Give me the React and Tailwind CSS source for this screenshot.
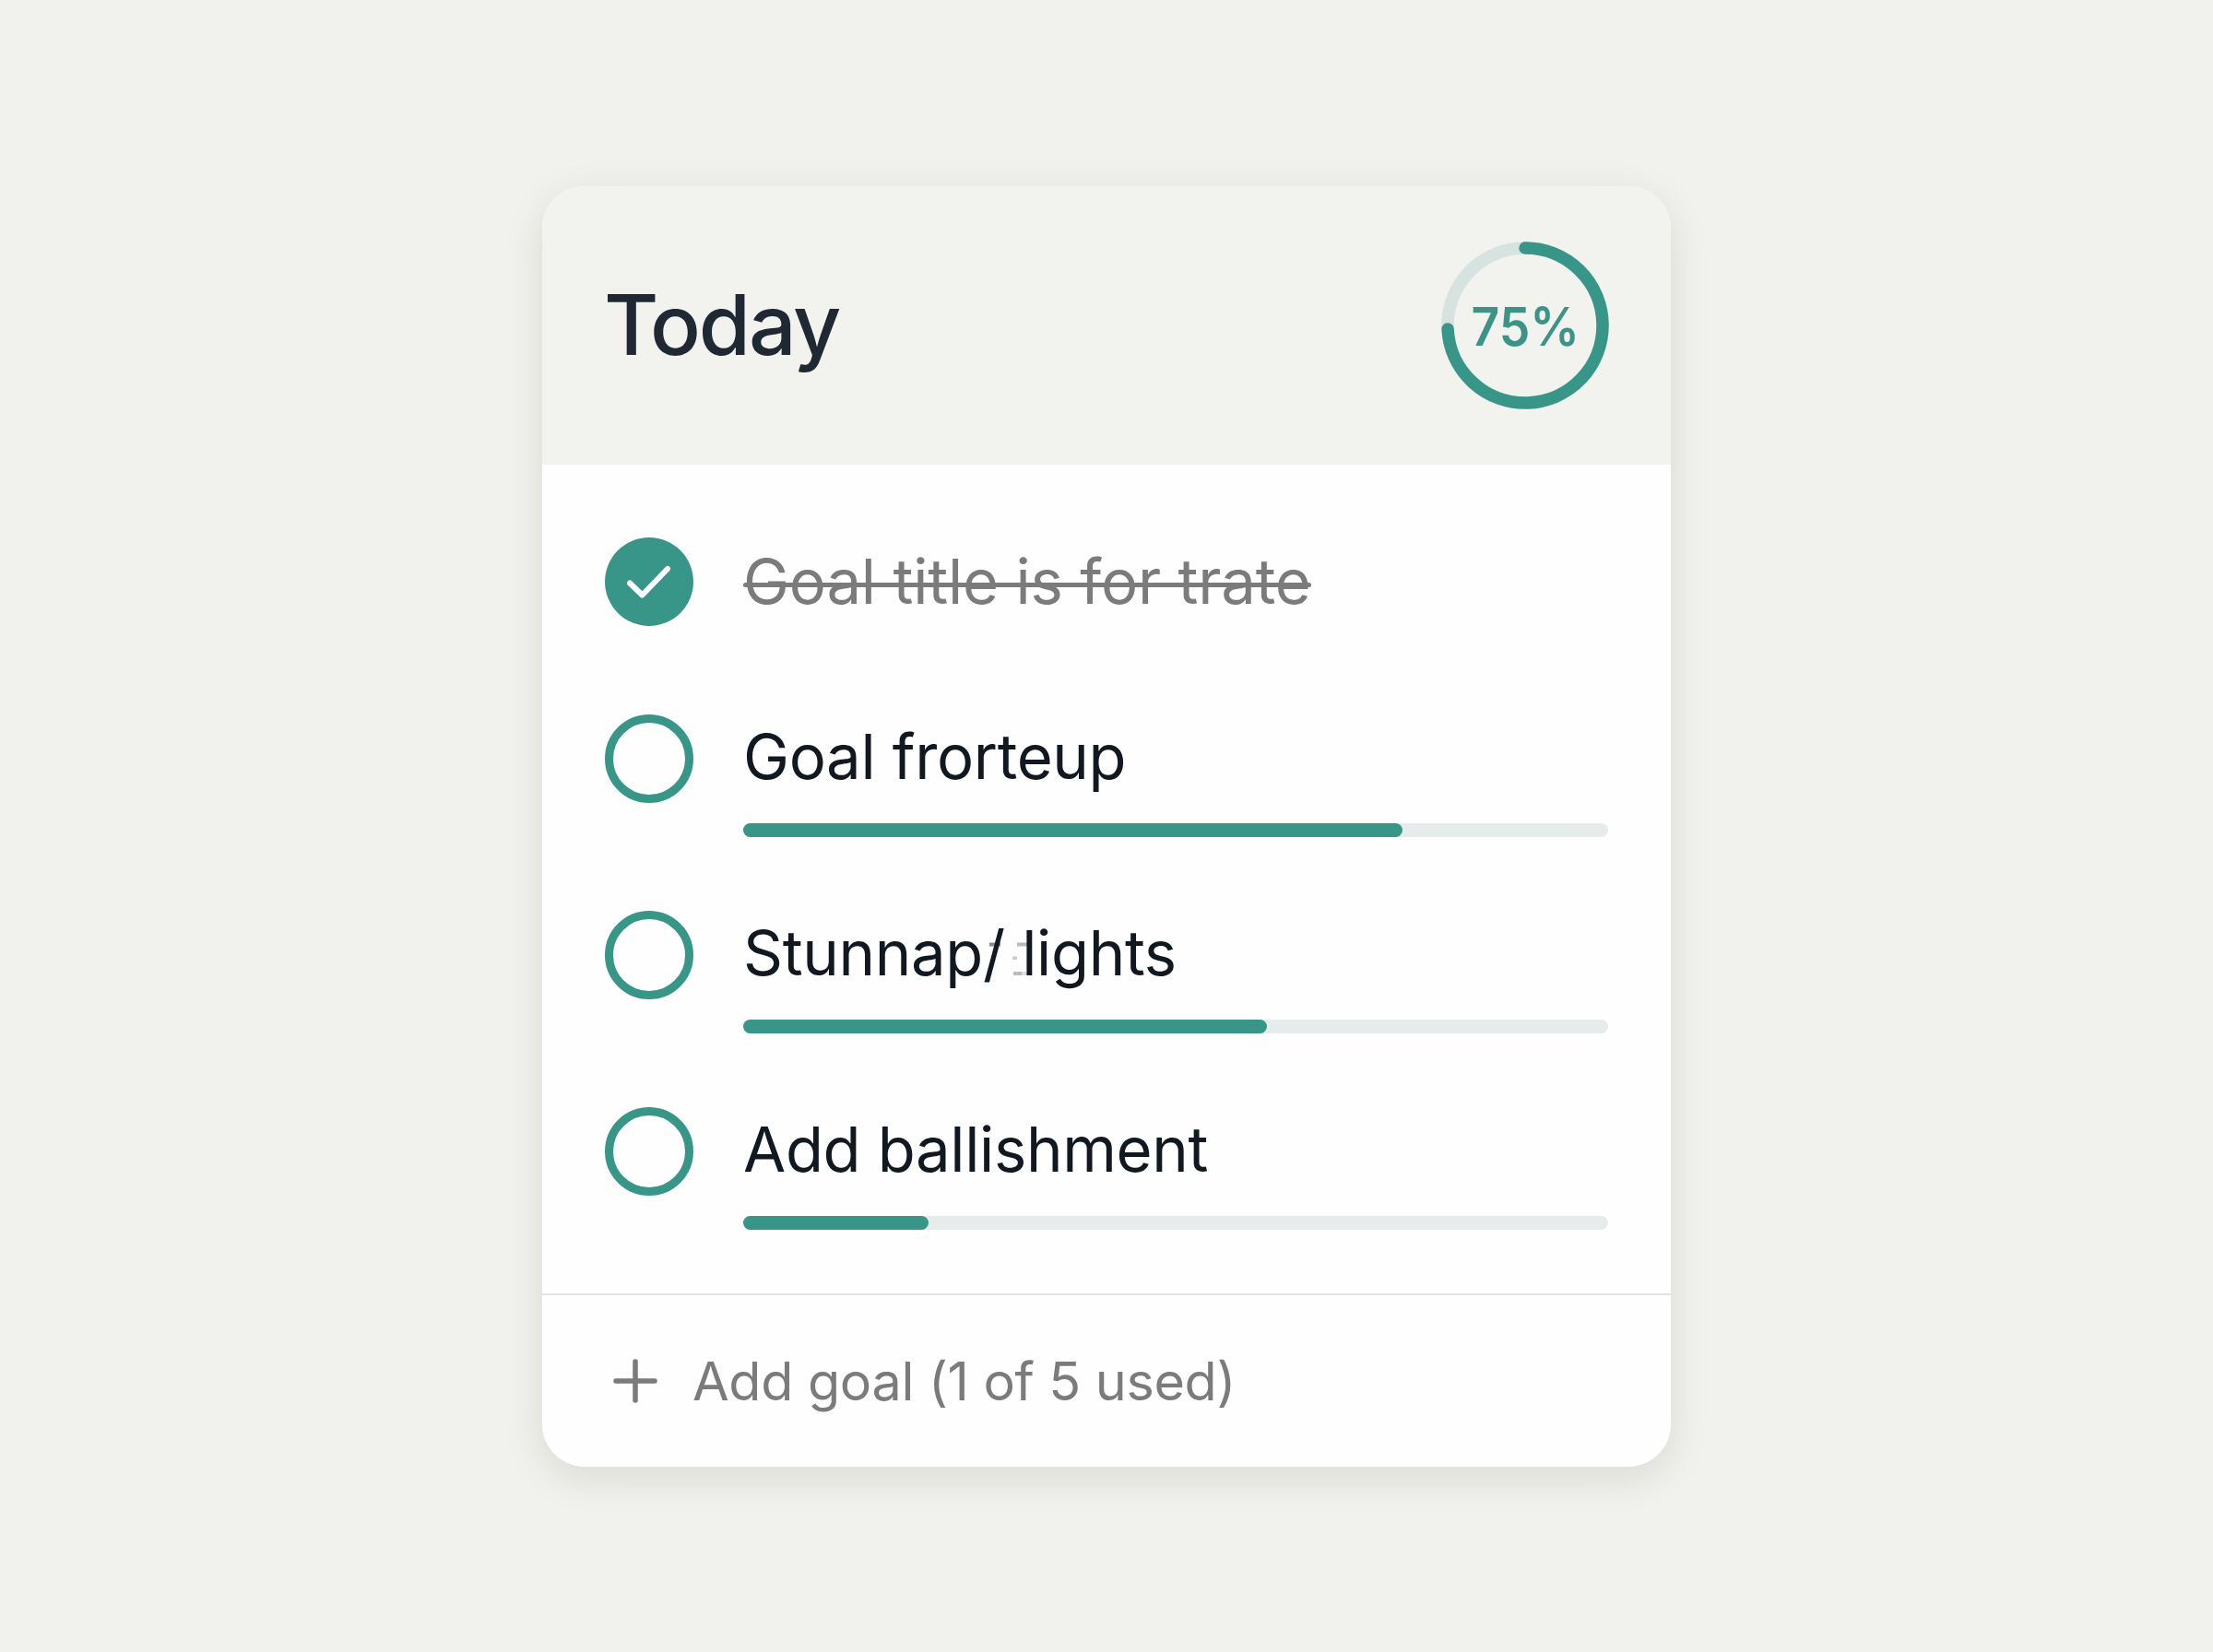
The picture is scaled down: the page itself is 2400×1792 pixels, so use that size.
const goals = [
  { title: "Goal title is for trate", done: true },
  { title: "Goal frorteup", width: 715 },
  { title: "Stunnap/ lights", width: 568, marks: true },
  { title: "Add ballishment", width: 201 },
];

function ProgressRing() {
  return (
    <div className="relative flex h-[182px] w-[182px] items-center justify-center">
      <svg className="absolute inset-0" viewBox="0 0 182 182" fill="none" strokeWidth="13.5">
        <circle cx="91" cy="91" r="84" stroke="#d6e3e1" />
        <path d="M91 7A84 84 0 1 1 7.1 95" stroke="#389689" strokeLinecap="round" />
      </svg>
      <span className="scale-x-[0.93] pt-0.5 text-[57.5px] font-semibold text-[#3c9488]">75%</span>
    </div>
  );
}

// faint dashes sitting behind the slash and the "l"
function TitleMarks() {
  return (
    <svg className="absolute top-[34px] left-[266px] h-[38px] w-[44px]" viewBox="0 0 44 38">
      <rect x="1" y="0.5" width="12" height="4" fill="#8a8c8c" />
      <rect x="31" y="0.5" width="11" height="4" fill="#b8b9b9" />
      <rect x="26" y="15.5" width="5" height="3.5" fill="#cbcbcb" />
      <rect x="27" y="32" width="9" height="4" fill="#bdbdbd" />
      <rect x="36" y="32" width="6" height="4" fill="#dedede" />
    </svg>
  );
}

function GoalRow({ goal }) {
  if (goal.done) {
    return (
      <li className="flex h-[112px] gap-[54px]">
        <div className="flex h-24 w-24 shrink-0 items-center justify-center rounded-full bg-[#389689]">
          <svg className="h-12 w-12" viewBox="0 0 48 48" fill="none" stroke="white" strokeWidth="6" strokeLinecap="round" strokeLinejoin="round">
            <path d="M3 25.5L16.5 38.5L44 10" />
          </svg>
        </div>
        <div className="flex h-24 items-center">
          <span className="relative text-[67px] tracking-[-0.2px] whitespace-nowrap text-[#7b7b7b] after:absolute after:top-[calc(50%+1px)] after:left-0 after:h-[5px] after:w-full after:rounded-full after:bg-[#7b7b7b]">
            {goal.title}
          </span>
        </div>
      </li>
    );
  }

  return (
    <li className="flex gap-[54px]">
      <div className="h-24 w-24 shrink-0 rounded-full border-[9px] border-[#389689]" />
      <div className="flex-1">
        <div className="relative flex h-24 items-center pb-[3px]">
          {goal.marks && <TitleMarks />}
          <span className="relative text-[67px] tracking-[-0.35px] whitespace-nowrap text-[#111820]">{goal.title}</span>
        </div>
        <div className="mt-[22px] h-[15px] rounded-full bg-[#e5eceb]">
          <div className="h-full rounded-full bg-[#389689]" style={{ width: goal.width }} />
        </div>
      </div>
    </li>
  );
}

export default function App() {
  return (
    <div className="flex h-[1792px] w-[2400px] justify-center bg-[#f1f1ed] pt-[202px] font-['Inter',sans-serif]">
      <div className="flex h-[1389px] w-[1224px] flex-col overflow-hidden rounded-[46px] bg-[#fefefe] shadow-[0_12px_44px_rgba(30,35,20,0.1)]">
        <header className="flex h-[302px] items-center justify-between bg-[#f2f2ee] px-[67px]">
          <h1 className="pb-0.5 text-[91px] font-medium tracking-[-2.2px] text-[#1f2933]">Today</h1>
          <ProgressRing />
        </header>
        <ul className="flex h-[899px] flex-col gap-[80px] px-[68px] pt-[79px]">
          {goals.map((goal) => (
            <GoalRow key={goal.title} goal={goal} />
          ))}
        </ul>
        <footer className="flex flex-1 items-center gap-[38px] border-t-2 border-[#e2e3e2] pl-[77px]">
          <svg className="h-12 w-12" viewBox="0 0 48 48" stroke="#7b7b7b" strokeWidth="5.5" strokeLinecap="round">
            <path d="M24 3V45M3 24H45" />
          </svg>
          <span className="text-[57.5px] tracking-[-0.34px] text-[#7b7b7b]">Add goal (1 of 5 used)</span>
        </footer>
      </div>
    </div>
  );
}
